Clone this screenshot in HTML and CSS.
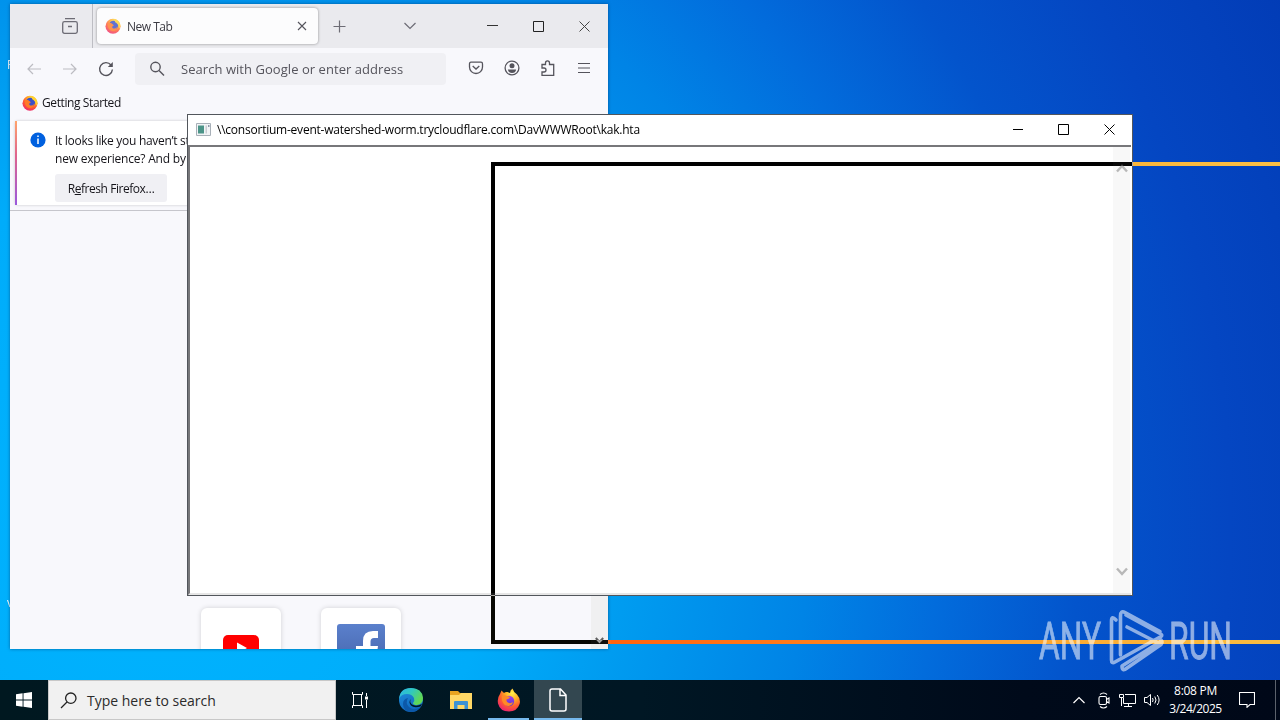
FILE: index.html
```html
<!DOCTYPE html>
<html lang="en">
  <head>
    <meta charset="UTF-8" />
    <title>Desktop</title>
    <link rel="stylesheet" href="styles.css">
  </head>
  <body>
    <svg class="defs" width="0" height="0">
      <defs>
        <radialGradient id="fox" cx="0.65" cy="0.2" r="0.9">
          <stop offset="0" stop-color="#fff04a" />
          <stop offset="0.35" stop-color="#ffab24" />
          <stop offset="0.65" stop-color="#ff5a30" />
          <stop offset="1" stop-color="#e8187c" />
        </radialGradient>
        <linearGradient id="globe" x1="0" y1="0" x2="0" y2="1">
          <stop offset="0" stop-color="#a040f0" />
          <stop offset="1" stop-color="#5a38d0" />
        </linearGradient>
        <linearGradient id="edgeGreen" x1="0" y1="0" x2="1" y2="0.5">
          <stop offset="0" stop-color="#2cb4e8" />
          <stop offset="0.5" stop-color="#30c8c0" />
          <stop offset="1" stop-color="#62d850" />
        </linearGradient>
        <linearGradient id="edgeBlue" x1="0" y1="0" x2="0.4" y2="1">
          <stop offset="0" stop-color="#2090dc" />
          <stop offset="1" stop-color="#1068c0" />
        </linearGradient>
        <linearGradient id="fb" x1="0" y1="0" x2="0" y2="1">
          <stop offset="0" stop-color="#5b80cc" />
          <stop offset="1" stop-color="#4262a8" />
        </linearGradient>
        <symbol id="firefox" viewBox="0 0 24 24">
          <path d="M3 6L4.500 2.500L7 5Q8.500 3.500 10.500 4L13 5Q13 2 15.500 .5Q16.500 4 20 6.500Q24 11 22.600 16Q20 23.500 12 23.500Q3 23.500 1 15.500Q0 10 3 6Z" fill="url(#fox)" />
          <circle cx="12" cy="13" r="5.200" fill="url(#globe)" />
          <path d="M5 8Q8 6.500 10 8L13 9Q12 11 9.500 11.500Q9 14 12 15Q14 15.500 16 14Q15 18 11 18Q6 17.500 5 12Z" fill="#ff8a26" />
        </symbol>
        <symbol id="firefoxSmall" viewBox="0 0 16 16">
          <circle cx="8" cy="8.300" r="7.500" fill="url(#fox)" />
          <circle cx="8.500" cy="7.300" r="4.600" fill="#3c50c8" />
          <path d="M3 5Q6 4 8 6.500L9 7.500Q6.500 8 7.500 10Q10 11.500 12 9Q11.500 13 8 13Q3.500 12.500 3 8Z" fill="#ff7a26" />
          <path d="M9.500 .8Q15.500 3 15.500 8.500L14 11Q14 6 10 4Z" fill="#ffd030" />
        </symbol>
      </defs>
    </svg>

    <div class="desktop">
      <span class="icon-label first">F</span>
      <span class="icon-label second">v</span>

      <div class="window firefox">
        <div class="tabs">
          <div class="tabs-left">
            <svg width="18" height="18" viewBox="0 0 18 18" fill="none" stroke="#6d6c75" stroke-width="1.3"><path d="M4 1.700H14M3.500 4.700H14.500Q16.300 4.700 16.300 6.500V14.500Q16.300 16.300 14.500 16.300H3.500Q1.700 16.300 1.700 14.500V6.500Q1.700 4.700 3.500 4.700ZM7 9.500H11" /></svg>
          </div>
          <div class="tab">
            <svg class="faded" width="16" height="16"><use href="#firefoxSmall" /></svg>
            <span class="tab-title">New Tab</span>
            <svg width="10" height="10" viewBox="0 0 10 10" stroke="#55545c" stroke-width="1.1"><path d="M1 1L9 9M9 1L1 9" /></svg>
          </div>
          <svg class="plus" width="13" height="13" viewBox="0 0 13 13" stroke="#6d6c75" stroke-width="1.2"><path d="M6.500 .5V12.500M.5 6.500H12.500" /></svg>
          <svg class="all-tabs" width="14" height="8" viewBox="0 0 14 8" fill="none" stroke="#6d6c75" stroke-width="1.2"><path d="M1.500 1L7 6.500L12.500 1" /></svg>
          <div class="controls">
            <svg width="11" height="11" viewBox="0 0 11 11" stroke="#333"><path d="M0 4.500H11" /></svg>
            <svg width="11" height="11" viewBox="0 0 11 11" fill="none" stroke="#222"><path d="M.5 .5H10.500V10.500H.5Z" /></svg>
            <svg width="11" height="11" viewBox="0 0 11 11" stroke="#444"><path d="M.5 .5L10.500 10.500M10.500 .5L.5 10.500" /></svg>
          </div>
        </div>

        <div class="toolbar">
          <svg width="14" height="12" viewBox="0 0 14 12" fill="none" stroke="#bcbcc2" stroke-width="1.2"><path d="M14 6H1M6 1L1 6L6 11" /></svg>
          <svg width="14" height="12" viewBox="0 0 14 12" fill="none" stroke="#bcbcc2" stroke-width="1.2"><path d="M0 6H13M8 1L13 6L8 11" /></svg>
          <svg width="16" height="16" viewBox="0 0 16 16" fill="none" stroke="#55545c" stroke-width="1.4"><path d="M13 4A6.400 6.400 0 1 0 14.400 8.500" /><path d="M14.800 1V6H9.800Z" fill="#55545c" stroke="none" /></svg>
          <div class="urlbar">
            <svg width="16" height="16" viewBox="0 0 16 16" fill="none" stroke="#55545c" stroke-width="1.4"><circle cx="6.500" cy="6" r="4.700" /><path d="M10 9.500L15 14.500" /></svg>
            <span>Search with Google or enter address</span>
          </div>
          <div class="tools">
            <svg width="16" height="16" viewBox="0 0 16 16" fill="none" stroke="#55545c" stroke-width="1.3"><path d="M3 2.200H13Q14.500 2.200 14.500 4V7A6.500 6.500 0 0 1 1.500 7V4Q1.500 2.200 3 2.200ZM4.700 6L8 9L11.300 6" /></svg>
            <svg width="16" height="16" viewBox="0 0 16 16" fill="none" stroke="#55545c" stroke-width="1.3"><circle cx="8" cy="8" r="6.900" /><circle cx="8" cy="5.800" r="2.500" fill="#55545c" stroke="none" /><path d="M3.800 9.500H12.200Q11.500 13 8 13Q4.500 13 3.800 9.500Z" fill="#55545c" stroke="none" /></svg>
            <svg width="16" height="16" viewBox="0 0 16 16" fill="none" stroke="#55545c" stroke-width="1.3"><path d="M2 7V4.500H5.500V3Q5.500 .8 7.500 .8Q9.500 .8 9.500 3V4.500H13.700V15.300H2V12H4Q6 12 6 10Q6 8 4 8H2Z" /></svg>
            <svg width="14" height="12" viewBox="0 0 14 12" stroke="#55545c" stroke-width="1.2"><path d="M1 1.500H13M1 6H13M1 10.500H13" /></svg>
          </div>
        </div>

        <div class="bookmarks">
          <svg width="16" height="16"><use href="#firefoxSmall" /></svg>
          <span>Getting Started</span>
        </div>

        <div class="notice">
          <svg width="16" height="16" viewBox="0 0 16 16"><circle cx="8" cy="8" r="7.600" fill="#0060df" /><path d="M8 3.500V5M8 6.500V12" stroke="#fff" stroke-width="1.500" /></svg>
          <div>
            <p class="line-a">It looks like you haven’t started Firefox</p>
            <p class="line-b">new experience? And by the way, welcome</p>
            <button class="refresh">R<u>e</u>fresh Firefox…</button>
          </div>
        </div>

        <div class="page">
          <div class="tile">
            <svg width="36" height="26" viewBox="0 0 36 26"><rect width="36" height="26" rx="5" fill="#f00" /><path d="M14 7.500L24 13L14 19Z" fill="#fff" /></svg>
          </div>
          <div class="tile facebook">
            <svg width="48" height="48" viewBox="0 0 48 48"><rect width="48" height="48" rx="3" fill="url(#fb)" /><path d="M26 48V29H19V22H26V17Q26 7 36 7H41V14H37Q33.500 14 33.500 17.500V22H41L40 29H33.500V48Z" fill="#fff" /></svg>
          </div>
          <div class="page-scroll">
            <svg width="9" height="7" viewBox="0 0 9 7" fill="none" stroke="#606060" stroke-width="2"><path d="M.8 1L4.500 5L8.200 1" /></svg>
          </div>
        </div>
      </div>

      <div class="window hta">
        <div class="hta-title">
          <svg width="15" height="13" viewBox="0 0 15 13"><path d="M.5 .5H14.500V12.500H.5Z" fill="#f2f4f6" stroke="#a8b0b8" /><path d="M2 2.500H8V10.500H2Z" fill="#4c9488" /><path d="M9.500 2.500H11V10.500H9.500Z" fill="#c9cdd2" /><path d="M12 2H13.500V4H12Z" fill="#8c98a8" /></svg>
          <span>\\consortium-event-watershed-worm.trycloudflare.com\DavWWWRoot\kak.hta</span>
          <div class="controls">
            <svg width="11" height="11" viewBox="0 0 11 11" stroke="#000"><path d="M1 5.500H11" /></svg>
            <svg width="11" height="11" viewBox="0 0 11 11" fill="none" stroke="#000"><path d="M.5 .5H10.500V10.500H.5Z" /></svg>
            <svg width="11" height="11" viewBox="0 0 11 11" stroke="#000"><path d="M.5 .5L10.500 10.500M10.500 .5L.5 10.500" /></svg>
          </div>
        </div>
        <div class="hta-body">
          <div class="hta-scroll">
            <svg width="12" height="9" viewBox="0 0 12 9" fill="none" stroke="#b8b8b8" stroke-width="2.400"><path d="M1 7.500L6 2L11 7.500" /></svg>
            <svg width="12" height="9" viewBox="0 0 12 9" fill="none" stroke="#b8b8b8" stroke-width="2.400"><path d="M1 1.500L6 7L11 1.500" /></svg>
          </div>
        </div>
      </div>

      <!-- outline of a window being dragged -->
      <div class="drag-outline"></div>

      <svg class="watermark" width="220" height="70" viewBox="0 0 220 70">
        <text x="4" y="51" textLength="62" lengthAdjust="spacingAndGlyphs">ANY</text>
        <g fill="none" stroke="#fff" stroke-width="3.600" stroke-linejoin="round" stroke-linecap="round">
          <path d="M81 12Q76.500 7 76.500 13V52Q76.500 56 80 54L126 28.500Q128 27 125 25.500L91 7" />
          <path d="M85.500 47V8Q85.500 2 90 4.500L125 23.500" />
          <path d="M92 19L126 36.500Q129 33 124 30.500M126 36.500L92 60Q87 64 87 58L125 34" />
        </g>
        <text x="134" y="51" textLength="63" lengthAdjust="spacingAndGlyphs">RUN</text>
      </svg>
    </div>

    <div class="taskbar">
      <div class="start">
        <svg width="16" height="16" viewBox="0 0 16 16" fill="#fff"><path d="M0 2.300L6.600 1.300V7.500H0ZM7.500 1.200L16 0V7.500H7.500ZM0 8.500H6.600V14.700L0 13.700ZM7.500 8.500H16V16L7.500 14.800Z" /></svg>
      </div>
      <div class="search">
        <svg width="17" height="17" viewBox="0 0 17 17" fill="none" stroke="#222" stroke-width="1.300"><circle cx="10.800" cy="6.200" r="5.200" /><path d="M7 10L1 16" /></svg>
        <span>Type here to search</span>
      </div>
      <div class="app">
        <svg width="16" height="16" viewBox="0 0 16 16" fill="none" stroke="#fff"><path d="M.5 0V2.500H10.500V0M1.500 2.500V13.500M9.500 2.500V13.500M.5 16V13.500H10.500V16M14.500 1V4M14.500 8V16" /><path d="M13 4.500H16V7.500H13Z" fill="#fff" stroke="none" /></svg>
      </div>
      <div class="app wide">
        <svg width="24" height="24" viewBox="0 0 24 24"><circle cx="12" cy="12" r="12" fill="url(#edgeBlue)" /><path d="M0 11Q1 0 12 0Q23 0 24 10Q24 16 18 17Q14 17 14 15Q16 13 15 10Q13 6 8 6Q2 6 0 11Z" fill="url(#edgeGreen)" /><path d="M9 10Q6 15 10 19Q14 23 21 19.500Q18 24 12 24Q4 23 4 16Q4 11 9 10Z" fill="#0c58a8" /><path d="M12 11Q10 14 13 16.500Q17 19 23 16L21.500 18.500Q15 20.500 12 17.500Q9 14 12 11Z" fill="#001722" /></svg>
      </div>
      <div class="app">
        <svg width="22" height="19" viewBox="0 0 22 19"><path d="M0 0H8L10 2H22V18H0Z" fill="#e8a420" /><path d="M0 4H9L11 2H22V18H0Z" fill="#ffd866" /><path d="M4 18V11Q4 10 5 10H17Q18 10 18 11V18H14.500V14H7.500V18Z" fill="#3c92d4" /></svg>
      </div>
      <div class="app running">
        <svg width="24" height="24"><use href="#firefox" /></svg>
      </div>
      <div class="app running active">
        <svg width="18" height="24" viewBox="0 0 18 24" fill="none" stroke="#fff" stroke-width="1.500"><path d="M3 1H11.500L17 7V21Q17 23 15 23H3Q1 23 1 21V3Q1 1 3 1ZM11 1V7.500H17" /></svg>
      </div>

      <div class="tray">
        <svg width="12" height="8" viewBox="0 0 12 8" fill="none" stroke="#fff" stroke-width="1.200"><path d="M.5 7L6 1.500L11.500 7" /></svg>
        <svg width="13" height="17" viewBox="0 0 13 17" fill="none" stroke="#fff" stroke-width="1.100"><path d="M2 2.500Q5.500 -.5 9 2.500M2 14.500Q5.500 17.500 9 14.500M2.500 4.500H7Q8.500 4.500 8.500 6V11Q8.500 12.500 7 12.500H2.500Q1 12.500 1 11V6Q1 4.500 2.500 4.500ZM8.500 7.500L11 6V11L8.500 9.500" /></svg>
        <svg width="17" height="14" viewBox="0 0 17 14" fill="none" stroke="#fff"><path d="M6 1.500H16.500V10.500H4.500V5M9.500 10.500V13M5 13.500H13M.5 1.500H4.500V4.500H.5ZM2.500 4.500V13" /></svg>
        <svg width="17" height="14" viewBox="0 0 17 14" fill="none" stroke="#fff"><path d="M.5 4.500H3L6.500 1.500V12.500L3 9.500H.5ZM8.500 5Q9.800 7 8.500 9M10.800 3.500Q13.200 7 10.800 10.500M13.200 2Q17 7 13.200 12" /></svg>
        <div class="clock">
          <span class="time">8:08 PM</span>
          <span class="date">3/24/2025</span>
        </div>
        <svg width="16" height="16" viewBox="0 0 16 16" fill="none" stroke="#fff" stroke-width="1.100"><path d="M.5 .5H15.500V12.500H11L8 15.300V12.500H.5Z" /></svg>
        <div class="show-desktop"></div>
      </div>
    </div>
  </body>
</html>
```
FILE: styles.css
```css
* {
  box-sizing: border-box;
  margin: 0;
  padding: 0;
}

body {
  width: 1280px;
  height: 720px;
  overflow: hidden;
  display: flex;
  flex-direction: column;
  font-family: "Open Sans", "Noto Sans", sans-serif;
  font-size: 12px;
  color: #15141a;
}

svg {
  display: block;
  flex: none;
}

.defs {
  position: absolute;
}

span,
p,
button {
  white-space: nowrap;
}

.desktop {
  position: relative;
  height: 680px;
  overflow: hidden;
  isolation: isolate;
  background: radial-gradient(circle at 160px 520px, #00b4ff 0, #00acfa 340px, #009cf0 470px, #0084e6 650px, #026cdc 780px, #0354cc 920px, #0446c2 1070px, #023cb6 1240px);
}

.icon-label {
  position: absolute;
  color: #fff;
  line-height: 14px;
}

.icon-label.first {
  left: 7px;
  top: 58px;
}

.icon-label.second {
  left: 7px;
  top: 596px;
}

.window {
  position: absolute;
  display: flex;
  flex-direction: column;
  overflow: hidden;
}

.firefox {
  left: 10px;
  top: 4px;
  width: 598px;
  height: 645px;
  background: #f8f8fc;
  box-shadow: 0 0 3px rgba(0, 30, 70, 0.5);
}

.tabs {
  display: flex;
  align-items: center;
  height: 44px;
  flex: none;
  background: #eaeaee;
}

.tabs-left {
  width: 83px;
  height: 44px;
  padding: 13px 0 0 51px;
  border-right: 1px solid #bdbdc3;
}

.tab {
  display: flex;
  align-items: center;
  width: 221px;
  height: 36px;
  margin-left: 4px;
  padding: 0 11px 0 8px;
  border-radius: 4px;
  background: #fcfcfd;
  box-shadow: 0 0 3px rgba(0, 0, 0, 0.4);
}

.faded {
  opacity: 0.8;
}

.tab-title {
  flex: 1;
  margin-left: 6px;
  color: #3c3b43;
  letter-spacing: -0.5px;
}

.plus {
  margin-left: 15px;
}

.all-tabs {
  margin-left: 57px;
}

.controls {
  display: flex;
  gap: 35px;
  margin-left: auto;
}

.tabs .controls {
  margin-right: 18px;
}

.toolbar {
  display: flex;
  align-items: center;
  height: 41px;
  flex: none;
  padding: 0 17px;
}

.toolbar > svg {
  margin-right: 22px;
}

.toolbar > svg:nth-child(3) {
  margin-left: -1px;
  margin-right: 21px;
}

.urlbar {
  display: flex;
  align-items: center;
  width: 311px;
  height: 32px;
  padding-left: 14px;
  border-radius: 4px;
  background: #f0f0f4;
  color: #55545c;
  font-size: 13px;
}

.urlbar span {
  margin-left: 16px;
  letter-spacing: 0.05px;
}

.tools {
  display: flex;
  align-items: center;
  gap: 20px;
  margin-left: 22px;
  padding-bottom: 1px;
}

.tools svg:last-child {
  margin-left: 1px;
}

.bookmarks {
  display: flex;
  align-items: center;
  gap: 4px;
  height: 27px;
  flex: none;
  padding-left: 12px;
  letter-spacing: -0.4px;
}

.notice {
  display: flex;
  gap: 9px;
  position: relative;
  height: 84px;
  flex: none;
  margin: 5px 5px;
  padding: 11px 0 0 15px;
  border-radius: 3px;
  background: #fff;
  box-shadow: 0 0 3px rgba(0, 0, 0, 0.2);
}

.notice::before {
  content: "";
  position: absolute;
  left: 0;
  top: 0;
  width: 2px;
  height: 84px;
  background: linear-gradient(#ffa46c, #e0648c 40%, #9a58dc);
}

.notice p {
  line-height: 18px;
  letter-spacing: -0.2px;
}

.notice .line-a {
  letter-spacing: -0.3px;
}

.refresh {
  width: 112px;
  height: 28px;
  margin-top: 6px;
  border: none;
  border-radius: 3px;
  background: #f0f0f4;
  color: #15141a;
  font: inherit;
  letter-spacing: -0.45px;
}

.page {
  position: relative;
  flex: 1;
  min-height: 0;
  display: flex;
  align-items: flex-start;
  gap: 40px;
  padding: 397px 0 0 191px;
  border-top: 1px solid #c6c6cc;
}

.tile {
  display: flex;
  justify-content: center;
  width: 80px;
  height: 80px;
  padding-top: 27px;
  border-radius: 6px;
  background: #fff;
  box-shadow: 0 0 5px rgba(0, 0, 0, 0.16);
}

.facebook {
  padding-top: 16px;
}

.page-scroll {
  position: absolute;
  right: 0;
  top: 0;
  height: 438px;
  width: 17px;
  background: #f0f0f1;
  display: flex;
  align-items: flex-end;
  justify-content: center;
  padding-bottom: 5px;
}

.hta {
  left: 187px;
  top: 114px;
  width: 946px;
  height: 482px;
  border: 1px solid #52565c;
  background: #fff;
}

.hta-title {
  display: flex;
  align-items: center;
  height: 30px;
  flex: none;
  padding: 0 17px 2px 8px;
  color: #000;
}

.hta-title span {
  margin-left: 6px;
  letter-spacing: -0.23px;
}

.hta-body {
  display: flex;
  justify-content: flex-end;
  flex: 1;
  margin-right: 1px;
  padding-right: 1px;
  border-top: 2px solid #77777a;
  border-left: 2px solid #77777a;
  border-bottom: 2px solid #e6e6e6;
}

.hta-scroll {
  display: flex;
  flex-direction: column;
  justify-content: space-between;
  align-items: center;
  width: 17px;
  padding: 17px 0;
  background: #f8f8f8;
}

.drag-outline {
  position: absolute;
  left: 491px;
  top: 162px;
  width: 945px;
  height: 482px;
  border: 4px solid #fff;
  mix-blend-mode: difference;
}

.watermark {
  position: absolute;
  left: 1035px;
  top: 608px;
  opacity: 0.55;
}

.watermark text {
  fill: #fff;
  stroke: #fff;
  stroke-width: 0.8px;
  font-family: Roboto, sans-serif;
  font-size: 52px;
}

.taskbar {
  display: flex;
  height: 40px;
  background: linear-gradient(90deg, #001820, #001724 50%, #000a1a 80%, #000818);
}

.start {
  display: flex;
  align-items: center;
  justify-content: center;
  width: 48px;
}

.search {
  display: flex;
  align-items: center;
  gap: 10px;
  width: 288px;
  padding-left: 11px;
  border: 1px solid #c8c8c8;
  background: #f1f1f1;
  color: #2b2b2b;
  font-size: 14px;
}

.app {
  display: flex;
  align-items: center;
  justify-content: center;
  width: 48px;
  height: 40px;
}

.wide {
  width: 54px;
}

.wide + .app {
  width: 46px;
}

.running {
  position: relative;
  width: 50px;
}

.running::after {
  content: "";
  position: absolute;
  left: 4px;
  right: 5px;
  bottom: 0;
  height: 2px;
  background: #76b9ed;
}

.active {
  width: 48px;
  background: #334750;
  margin-left: 0;
}

.active::after {
  left: 0;
  right: 0;
}

.tray {
  display: flex;
  align-items: center;
  gap: 8px;
  margin-left: auto;
  color: #fff;
}

.tray > svg:first-child {
  margin-right: 5px;
}

.clock {
  display: flex;
  flex-direction: column;
  align-items: center;
  width: 53px;
  line-height: 18px;
  margin-right: 9px;
  letter-spacing: -0.5px;
}

.time {
  letter-spacing: -0.3px;
}

.show-desktop {
  width: 5px;
  height: 40px;
  margin-left: 12px;
  border-left: 1px solid #5c626c;
}
```
